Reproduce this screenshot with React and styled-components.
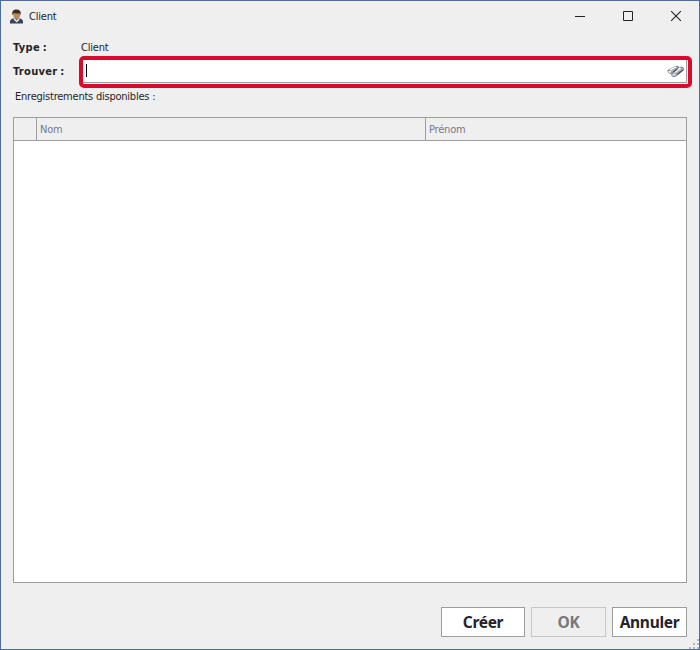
import React from "react";
import styled, { createGlobalStyle } from "styled-components";

const Global = createGlobalStyle`
  *, *::before, *::after { box-sizing: border-box; }
  body {
    margin: 0;
    font-family: "DejaVu Sans Condensed", "DejaVu Sans", "Noto Sans", sans-serif;
    font-stretch: condensed;
    font-size: 11px;
    color: #24242a;
  }
`;

const Window = styled.div`
  position: relative;
  width: 700px;
  height: 650px;
  border: 1px solid #4a6c9e;
  background: #efefef;
  display: flex;
  flex-direction: column;
  overflow: hidden;
`;

const TitleBar = styled.header`
  height: 30px;
  flex: none;
  display: flex;
  align-items: center;
  padding-left: 8px;
  margin-right: -1px;
`;

const Title = styled.span`
  flex: 1;
  margin-left: 5px;
  padding-top: 1px;
  line-height: 14px;
  letter-spacing: -0.2px;
`;

const WindowControl = styled.span`
  width: 48px;
  height: 30px;
  display: flex;
  align-items: center;
  justify-content: center;
`;

const Form = styled.section`
  flex: none;
  height: 86px;
  padding: 3px 0 0 12px;
`;

const Field = styled.div`
  display: flex;
  align-items: center;
  height: ${(p) => p.$height}px;
  padding-top: ${(p) => p.$top || 0}px;
`;

const Label = styled.span`
  flex: none;
  width: ${(p) => p.$width}px;
  font-weight: bold;
  line-height: 14px;
  letter-spacing: 0.3px;
  word-spacing: -0.8px;
  white-space: nowrap;
`;

const Value = styled.span`
  line-height: 14px;
  letter-spacing: -0.2px;
  white-space: nowrap;
`;

const Highlight = styled.div`
  width: 613px;
  height: 32px;
  border: 4px solid #da0a2d;
  border-radius: 5px;
  padding: 0 1px 1px 0;
  background: #efefef;
`;

const SearchInput = styled.div`
  height: 23px;
  background: #fff;
  border-right: 1px solid #9d9d9d;
  border-bottom: 1px solid #9d9d9d;
  display: flex;
  align-items: center;
  justify-content: space-between;
  padding: 0 1px 0 3px;
`;

const Caret = styled.span`
  width: 1px;
  height: 13px;
  margin-bottom: 1px;
  background: #000;
`;

const Caption = styled.div`
  padding: 2px 0 0 2px;
  line-height: 14px;
  letter-spacing: -0.23px;
`;

const Table = styled.section`
  flex: none;
  width: 674px;
  height: 466px;
  margin-left: 12px;
  border: 1px solid #9d9d9d;
  background: #fff;
`;

const TableHeader = styled.div`
  display: grid;
  grid-template-columns: 23px 389px 1fr;
  height: 23px;
  background: #efefef;
  border-bottom: 1px solid #9d9d9d;
`;

const HeaderCell = styled.div`
  padding: 5px 0 0 3px;
  line-height: 14px;
  color: #77778a;
  letter-spacing: -0.2px;
  &:not(:last-child) { border-right: 1px solid #9d9d9d; }
`;

const Footer = styled.footer`
  display: flex;
  justify-content: flex-end;
  gap: 6px;
  padding: 24px 12px 0 0;
`;

const Button = styled.button`
  width: ${(p) => p.$width}px;
  height: 30px;
  padding: 0 0 1px;
  border: 1px solid #9d9d9d;
  background: #fff;
  color: #24242a;
  font: bold 15.5px "Noto Sans", "DejaVu Sans", sans-serif;
  letter-spacing: -0.3px;
  white-space: nowrap;
  &:disabled { background: #efefef; border-color: #c6c6c6; color: #77777c; }
`;

const Grip = styled.svg`
  position: absolute;
  right: 0;
  bottom: 0;
`;

function PersonIcon() {
  return (
    <svg width="15" height="15" viewBox="0 0 15 15">
      <path d="M1 14.5v-2q0-2 1.8-2.6L5 9h5l2.2.9q1.8.6 1.8 2.6v2z" fill="#34435a" />
      <path d="M4.6 9.2h1.5l1.6 2.2L9.2 9.2h1.2l.2 1.6-2.9 2.6-3-2.6z" fill="#dfe5ec" />
      <path d="M6 7.5h3.2v2.3l-1.6 1.6L6 9.8z" fill="#a87843" />
      <ellipse cx="7.7" cy="5.5" rx="3.5" ry="4.1" fill="#bd8955" />
      <path d="M3.5 6.3Q2.4 1.2 6.4.6 12.4-.2 11.8 6.3L10.8 4.3Q7 5 5 3.7z" fill="#3b2c21" />
    </svg>
  );
}

function BinocularsIcon() {
  return (
    <svg width="18" height="14" viewBox="0 0 18 14">
      <path d="m1 6.2 7-3.6q2.7-1 4 .5L5.5 8.5Q3.5 10.2 1.7 8.8.5 7.6 1 6.2z" fill="#a9adb0" stroke="#5f6264" strokeWidth=".7" />
      <path d="m3 5.9 6-3" stroke="#fff" strokeWidth="1.4" />
      <ellipse cx="2.7" cy="7.8" rx="1.3" ry="1.1" fill="#eef3f6" />
      <path d="m5 9 6.8-5.3q3-1.3 4.7.3.6 1.5-.8 2.8l-6.5 5q-2.6 1.7-4.1.2Q4.2 10.6 5 9z" fill="#a9adb0" stroke="#5f6264" strokeWidth=".7" />
      <path d="m7.4 8.4 6-4.5" stroke="#fff" strokeWidth="1.8" />
      <path d="m10 10.6 6.2-4.7M6.5 8l4.2-3.4" stroke="#44474a" strokeWidth="1.1" />
      <ellipse cx="6.9" cy="10.8" rx="1.7" ry="1.3" fill="#b9dcf6" />
    </svg>
  );
}

const gripDots = [[8, 0], [4, 4], [8, 4], [0, 8], [4, 8], [8, 8]];

export default function App() {
  return (
    <>
      <Global />
      <Window>
        <TitleBar>
          <PersonIcon />
          <Title>Client</Title>
          <WindowControl>
            <svg width="10" height="10"><path d="M0 5.5h10" stroke="#222" /></svg>
          </WindowControl>
          <WindowControl>
            <svg width="10" height="10"><path d="M.5.5h9v9h-9z" fill="none" stroke="#222" /></svg>
          </WindowControl>
          <WindowControl>
            <svg width="10" height="10"><path d="m0 0 10 10M10 0 0 10" stroke="#222" strokeWidth="1.1" /></svg>
          </WindowControl>
        </TitleBar>
        <Form>
          <Field $height={22} $top={5}>
            <Label $width={68}>Type :</Label>
            <Value>Client</Value>
          </Field>
          <Field $height={32}>
            <Label $width={66}>Trouver :</Label>
            <Highlight>
              <SearchInput>
                <Caret />
                <BinocularsIcon />
              </SearchInput>
            </Highlight>
          </Field>
          <Caption>Enregistrements disponibles :</Caption>
        </Form>
        <Table>
          <TableHeader>
            <HeaderCell />
            <HeaderCell>Nom</HeaderCell>
            <HeaderCell>Prénom</HeaderCell>
          </TableHeader>
        </Table>
        <Footer>
          <Button $width={84}>Créer</Button>
          <Button $width={75} disabled>OK</Button>
          <Button $width={75}>Annuler</Button>
        </Footer>
        <Grip width="10" height="10">
          {gripDots.map(([x, y]) => (
            <rect key={`${x}-${y}`} x={x} y={y} width="2" height="2" fill="#b8b8b8" />
          ))}
        </Grip>
      </Window>
    </>
  );
}
